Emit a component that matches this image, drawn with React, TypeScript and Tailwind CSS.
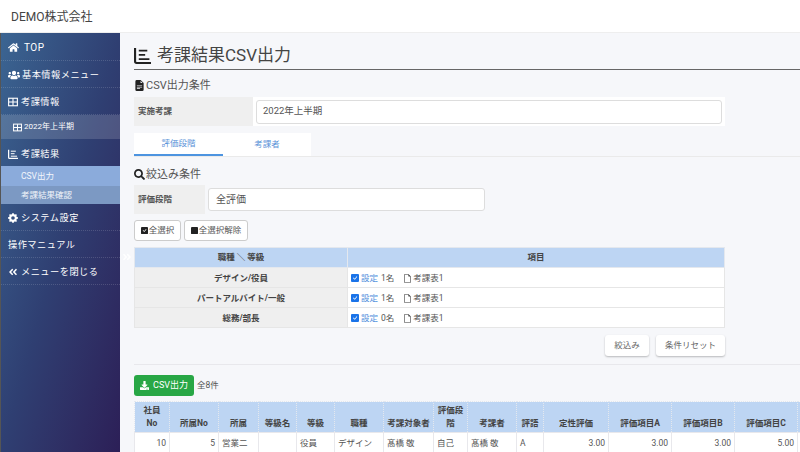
import { ReactNode } from 'react';
import { BsCheckSquareFill, BsFileEarmark, BsFileEarmarkTextFill, BsGearFill, BsSquareFill } from 'react-icons/bs';
import { FaAngleDoubleLeft, FaAngleDoubleRight, FaDownload, FaHome, FaSearch, FaUsers } from 'react-icons/fa';

const jobRows = [
  { name: 'デザイン/役員', count: '1名' },
  { name: 'パートアルバイト/一般', count: '1名' },
  { name: '総務/部長', count: '0名' },
];

const columns = [
  { label: '社員\nNo', width: 'w-[35px]', value: '10', align: 'text-right' },
  { label: '所属No', width: 'w-[49px]', value: '5', align: 'text-right' },
  { label: '所属', width: 'w-[40px]', value: '営業二課', align: 'text-left' },
  { label: '等級名', width: 'w-[38px]', value: '', align: 'text-left' },
  { label: '等級', width: 'w-[38px]', value: '役員', align: 'text-left' },
  { label: '職種', width: 'w-[49px]', value: 'デザイン', align: 'text-left' },
  { label: '考課対象者', width: 'w-[50px]', value: '髙橋 敬', align: 'text-left' },
  { label: '評価段階', width: 'w-[34px]', value: '自己', align: 'text-left' },
  { label: '考課者', width: 'w-[49px]', value: '髙橋 敬', align: 'text-left' },
  { label: '評語', width: 'w-[27px]', value: 'A', align: 'text-left' },
  { label: '定性評価', width: 'w-[65px]', value: '3.00', align: 'text-right' },
  { label: '評価項目A', width: 'w-[63px]', value: '3.00', align: 'text-right' },
  { label: '評価項目B', width: 'w-[63px]', value: '3.00', align: 'text-right' },
  { label: '評価項目C', width: 'w-[63px]', value: '5.00', align: 'text-right' },
  { label: '', width: 'w-[63px]', value: '', align: 'text-right' },
];

// axis with three bars, used for 考課結果
function ResultIcon({ size, className = '' }: { size: number; className?: string }) {
  return (
    <svg width={size} height={size} viewBox="0 0 16 16" fill="none" stroke="currentColor" className={`shrink-0 ${className}`}>
      <path d="M1 1v12.5a1.5 1.5 0 0 0 1.5 1.5H16" strokeWidth="2" />
      <path d="M4.5 3.5h8M4.5 7.5h6M4.5 11.5h10" strokeWidth="1.6" />
    </svg>
  );
}

function GridIcon({ size }: { size: number }) {
  return (
    <svg width={size} height={size} viewBox="0 0 16 16" fill="none" stroke="currentColor" strokeWidth="1.8" className="shrink-0">
      <rect x="1" y="2" width="14" height="12" />
      <path d="M8 2v12M1 8h14" />
    </svg>
  );
}

function NavItem({ icon, label, className = '' }: { icon?: ReactNode; label: string; className?: string }) {
  return (
    <div className={`flex h-[27px] items-center gap-[3px] border-b border-dotted border-white/15 pl-[7px] pt-[1px] text-[9.2px] text-white ${className}`}>
      {icon}
      <span className="tracking-[0.5px]">{label}</span>
    </div>
  );
}

function SubItem({ label, className }: { label: string; className: string }) {
  return <div className={`flex items-center pl-[20px] text-[8.5px] text-white/90 ${className}`}>{label}</div>;
}

export default function App() {
  return (
    <div className="flex h-screen w-[800px] flex-col overflow-hidden bg-[#f6f7fa] font-['Roboto','Noto_Sans_CJK_JP',sans-serif] text-[#555]">
      <header className="flex h-[33px] shrink-0 items-center border-b border-[#eee] bg-white pl-[11px] pt-[1px] text-[12px] text-[#444]">
        DEMO株式会社
      </header>

      <div className="flex min-h-0 flex-1">
        <aside className="w-[120px] shrink-0 border-l border-[#555] bg-linear-to-br from-[#3b6592] via-[#2f3f72] to-[#2c1f57] pt-[1px]">
          <NavItem icon={<FaHome size={11} />} label="TOP" className="!gap-[5px] text-[10px]" />
          <NavItem icon={<FaUsers size={12} />} label="基本情報メニュー" className="!gap-[2px]" />
          <NavItem icon={<GridIcon size={10} />} label="考課情報" className="!pt-[2px]" />
          <div className="flex h-[24px] items-center gap-[2px] bg-white/15 pl-[12px] text-[8px] text-white">
            <GridIcon size={9} />
            2022年上半期
          </div>
          <NavItem icon={<ResultIcon size={10} />} label="考課結果" className="!border-none !pt-[2px]" />
          <SubItem label="CSV出力" className="h-[20px] bg-[#8babdb]" />
          <SubItem label="考課結果確認" className="h-[18px] bg-[#7c99c3]" />
          <NavItem icon={<BsGearFill size={10} />} label="システム設定" />
          <NavItem label="操作マニュアル" />
          <NavItem icon={<FaAngleDoubleLeft size={10} />} label="メニューを閉じる" />
        </aside>

        <main className="relative min-w-0 flex-1 overflow-hidden pl-[14px] pt-[11px]">
          <FaAngleDoubleRight size={10} className="absolute left-[2px] top-[219px] text-white" />

          <h1 className="flex h-[26px] items-center gap-[6px] border-b border-[#666] pb-[2px] text-[17px] leading-none text-[#444]">
            <ResultIcon size={17} className="text-[#222]" />
            考課結果CSV出力
          </h1>

          <div className="mt-[6px] flex h-[19px] items-center gap-[1px] pt-[2px] text-[11px]">
            <BsFileEarmarkTextFill size={11} className="-mt-[3px] text-[#222]" />
            CSV出力条件
          </div>

          <div className="mt-[2px] flex h-[29px] w-[591px] bg-white">
            <div className="flex w-[119px] items-center bg-[#efefef] pl-[4px] text-[8.5px] font-bold">実施考課</div>
            <div className="ml-[3px] flex h-[24px] w-[466px] self-center items-center rounded-[3px] border border-[#ddd] bg-white pl-[6px] text-[9.5px]">
              2022年上半期
            </div>
          </div>

          <div className="mt-[7px] border-b border-[#eaeaea]">
            <div className="flex h-[23px] w-[177px] bg-white text-[8.5px] text-[#5b93d8]">
              <div className="flex w-[89px] items-center justify-center border-b-2 border-[#4d94e0]">評価段階</div>
              <div className="flex w-[88px] items-center justify-center">考課者</div>
            </div>
          </div>

          <div className="mt-[8px] flex h-[19px] items-center gap-[1px] pt-[2px] text-[11px]">
            <FaSearch size={11} className="-mt-[3px] text-[#222]" />
            絞込み条件
          </div>

          <div className="mt-[1px] flex h-[29px]">
            <div className="flex w-[71px] items-center bg-[#efefef] pl-[4px] text-[8.5px] font-bold">評価段階</div>
            <div className="ml-[3px] flex h-[23px] w-[277px] self-center items-center rounded-[3px] border border-[#ddd] bg-white pl-[7px] text-[10px]">
              全評価
            </div>
          </div>

          <div className="mt-[6px] flex gap-[3px]">
            <button className="flex h-[21px] w-[47px] items-center justify-center rounded-[3px] border border-[#ccc] bg-white text-[8.5px]">
              <BsCheckSquareFill size={7} className="mr-[1px] text-[#222]" />
              全選択
            </button>
            <button className="flex h-[21px] w-[64px] items-center justify-center rounded-[3px] border border-[#ccc] bg-white text-[8.5px]">
              <BsSquareFill size={7} className="mr-[1px] text-[#222]" />
              全選択解除
            </button>
          </div>

          <table className="mt-[6px] w-[591px] table-fixed border-collapse bg-white text-[8.5px]">
            <thead>
              <tr className="h-[20px] bg-[#bdd5f3] font-bold text-[#444]">
                <th className="w-[213px] border border-[#e4e8ee]">職種 ＼ 等級</th>
                <th className="border border-[#e4e8ee]">項目</th>
              </tr>
            </thead>
            <tbody>
              {jobRows.map((row) => (
                <tr key={row.name} className="h-[20px]">
                  <td className="border border-[#e6e6e6] bg-[#efefef] pt-[1px] text-center font-bold text-[#444]">{row.name}</td>
                  <td className="border border-[#e6e6e6] pl-[3px] pt-[1px]">
                    <div className="flex items-center text-[8.5px]">
                      <BsCheckSquareFill size={8} className="mr-[2px] text-[#1a73e8]" />
                      <span className="text-[#4f8fdc]">設定</span>
                      <span className="ml-[3px]">{row.count}</span>
                      <BsFileEarmark size={9} className="ml-[9px] text-[#333]" />
                      <span className="ml-[1px]">考課表1</span>
                    </div>
                  </td>
                </tr>
              ))}
            </tbody>
          </table>

          <div className="mt-[7px] flex w-[591px] justify-end gap-[7px]">
            <button className="h-[21px] w-[44px] rounded-[3px] bg-white text-[8.5px] text-[#666] shadow-[0_1px_2px_rgba(0,0,0,0.25)]">絞込み</button>
            <button className="h-[21px] w-[69px] rounded-[3px] bg-white text-[8.5px] text-[#666] shadow-[0_1px_2px_rgba(0,0,0,0.25)]">条件リセット</button>
          </div>

          <div className="mt-[8px] border-b border-[#e8e8ec]" />

          <div className="mt-[10px] flex items-center gap-[3px]">
            <button className="flex h-[21px] w-[60px] items-center justify-center gap-[4px] rounded-[3px] bg-[#28a745] text-[9px] text-white">
              <FaDownload size={9} />
              CSV出力
            </button>
            <span className="text-[8.5px]">全8件</span>
          </div>

          <table className="mt-[5px] w-[726px] table-fixed border-collapse text-[8.5px]">
            <thead>
              <tr className="h-[31px] bg-[#bdd5f3] text-[#444]">
                {columns.map((col) => (
                  <th key={col.width + col.label} className={`${col.width} whitespace-pre-line border border-dotted border-[#e4e8ee] px-[2px] pb-[2px] align-bottom font-bold leading-[13px]`}>
                    {col.label}
                  </th>
                ))}
              </tr>
            </thead>
            <tbody>
              <tr className="h-[19px] bg-white">
                {columns.map((col) => (
                  <td key={col.width + col.label} className={`${col.align} border border-[#e8e8ec] px-[3px] pt-[4px] align-top leading-[13px]`}>
                    {col.value}
                  </td>
                ))}
              </tr>
            </tbody>
          </table>
        </main>
      </div>
    </div>
  );
}
